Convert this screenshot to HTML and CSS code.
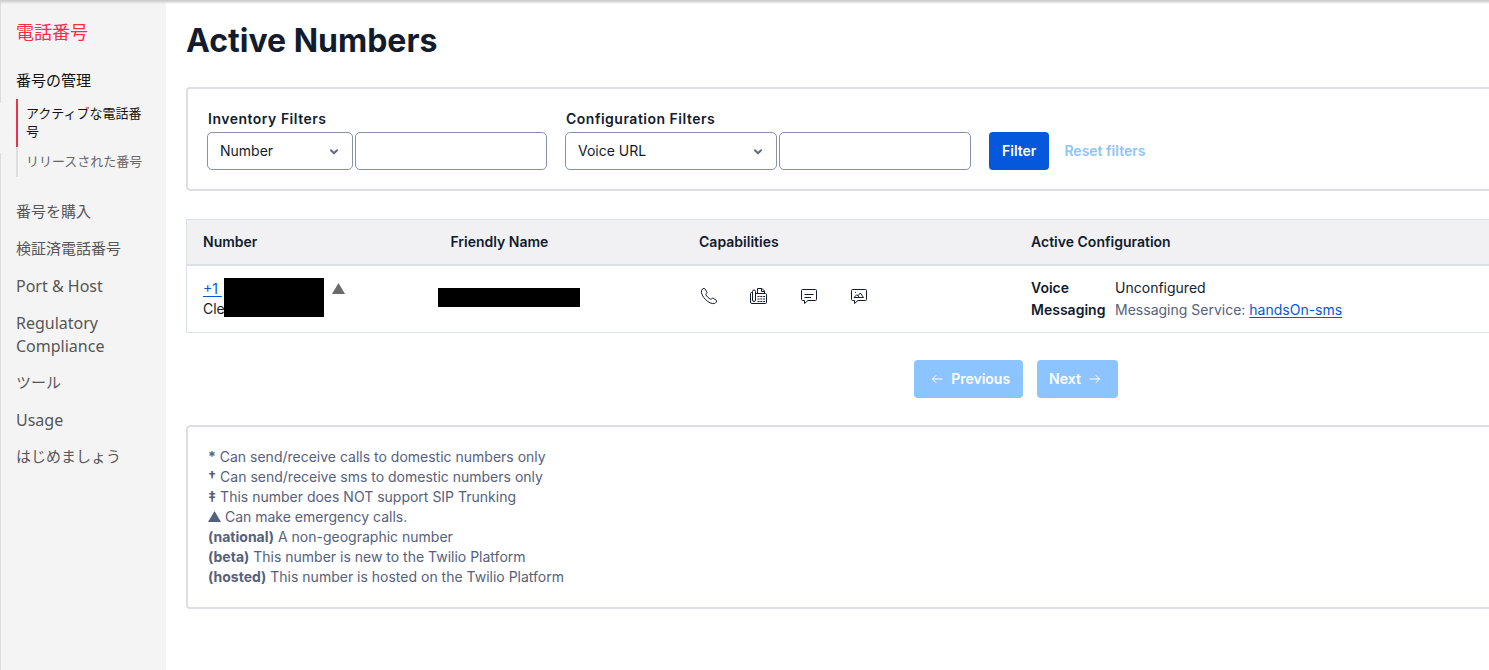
FILE: index.html
```html
<!DOCTYPE html>
<html lang="ja">
<head>
<meta charset="utf-8">
<title>Active Numbers</title>
<link rel="stylesheet" href="styles.css">
</head>
<body>
<div class="page">
  <nav class="sidebar" aria-label="電話番号">
    <a class="sidebar-title" href="#">電話番号</a>
    <ul class="menu">
      <li>
        <a class="menu-link current" href="#">番号の管理</a>
        <ul class="submenu">
          <li><a class="submenu-link active" href="#">アクティブな電話番号</a></li>
          <li><a class="submenu-link" href="#">リリースされた番号</a></li>
        </ul>
      </li>
      <li><a class="menu-link" href="#">番号を購入</a></li>
      <li><a class="menu-link" href="#">検証済電話番号</a></li>
      <li><a class="menu-link latin" href="#">Port &amp; Host</a></li>
      <li><a class="menu-link latin" href="#">Regulatory Compliance</a></li>
      <li><a class="menu-link" href="#">ツール</a></li>
      <li><a class="menu-link latin" href="#">Usage</a></li>
      <li><a class="menu-link" href="#">はじめましょう</a></li>
    </ul>
  </nav>

  <main class="content" lang="en">
    <h1 class="heading">Active Numbers</h1>

    <form class="panel filters">
      <div class="filter-group">
        <label class="filter-label" for="inventory">Inventory Filters</label>
        <div class="filter-fields">
          <span class="select-wrap narrow">
            <select class="field" id="inventory"><option>Number</option></select>
            <svg class="chevron" viewBox="0 0 8 6" aria-hidden="true"><path d="M1 1.2 4 4.2 7 1.2"/></svg>
          </span>
          <input class="field text" type="text" aria-label="Inventory filter value">
        </div>
      </div>
      <div class="filter-group">
        <label class="filter-label" for="configuration">Configuration Filters</label>
        <div class="filter-fields">
          <span class="select-wrap wide">
            <select class="field" id="configuration"><option>Voice URL</option></select>
            <svg class="chevron" viewBox="0 0 8 6" aria-hidden="true"><path d="M1 1.2 4 4.2 7 1.2"/></svg>
          </span>
          <input class="field text" type="text" aria-label="Configuration filter value">
        </div>
      </div>
      <div class="filter-actions">
        <button class="button primary" type="button">Filter</button>
        <button class="button plain" type="button" disabled>Reset filters</button>
      </div>
    </form>

    <table class="numbers">
      <colgroup><col class="col-number"><col class="col-name"><col class="col-capabilities"><col></colgroup>
      <thead>
        <tr><th>Number</th><th>Friendly Name</th><th>Capabilities</th><th>Active Configuration</th></tr>
      </thead>
      <tbody>
        <tr>
          <td>
            <div class="number-cell">
              <div class="number-lines"><a class="link" href="#">+1&nbsp;</a><span>Cle</span></div>
              <span class="redacted phone"></span>
              <svg class="triangle" viewBox="0 0 13 11" role="img" aria-label="Can make emergency calls"><path d="M6.500 0 13 11H0z"/></svg>
            </div>
          </td>
          <td class="name-cell"><span class="redacted name"></span></td>
          <td>
            <div class="capabilities">
              <svg viewBox="0 0 18 18" role="img" aria-label="Voice"><path d="M1.500 3.300C2.300 1.700 4 .9 4.800 1.700L6.900 4.900C7.400 6 5.700 6.600 5.900 7.500C6.500 9.400 8.900 11.600 10.600 12.200C11.600 12.400 12 10.700 13.100 11.200L16.400 13.300C17.300 14.200 16 16 14.400 16.500C9.500 17.900.2 9.200 1.500 3.300z"/></svg>
              <svg viewBox="0 0 18 18" role="img" aria-label="Fax"><path d="M2.500 5.500H1.500Q.5 5.500 .5 6.500V15Q.5 16.500 2 16.500H15.500Q16.500 16.500 16.500 15.500V7.500Q16.500 6.500 15.500 6.500H6M2.500 4.500Q2.500 3 4 3T5.500 4.500V13Q5.500 14.500 4 14.500T2.500 13zM7.500 6.500V1.500H12L14.500 4V6.500M11.500 1.500V4.500H14.500"/><path d="M7.500 9.500H15M7.500 12H15M7.500 14.500H15" stroke-dasharray="2 .8"/></svg>
              <svg viewBox="0 0 18 18" role="img" aria-label="SMS"><path d="M2.500 2.500H15.500Q16.500 2.500 16.500 3.500V12.500Q16.500 13.500 15.500 13.500H8L4.500 16.500V13.500H2.500Q1.500 13.500 1.500 12.500V3.500Q1.500 2.500 2.500 2.500zM4.500 7.500H13.500M4.500 10.500H11"/></svg>
              <svg viewBox="0 0 18 18" role="img" aria-label="MMS"><path d="M2.500 2.500H15.500Q16.500 2.500 16.500 3.500V12.500Q16.500 13.500 15.500 13.500H8L4.500 16.500V13.500H2.500Q1.500 13.500 1.500 12.500V3.500Q1.500 2.500 2.500 2.500zM4 10.500 6.800 7.700 8 8.800 10.300 6 13.500 10.500zM8 8.800 9 10M5 5.300H6"/></svg>
            </div>
          </td>
          <td class="config-cell">
            <dl class="config">
              <dt>Voice</dt><dd>Unconfigured</dd>
              <dt>Messaging</dt><dd class="muted">Messaging Service: <a class="link" href="#">handsOn-sms</a></dd>
            </dl>
          </td>
        </tr>
      </tbody>
    </table>

    <div class="pagination">
      <button class="button pager previous" type="button" disabled>
        <svg viewBox="0 0 12 10" aria-hidden="true"><path d="M11 5H1.500M5 1.500 1.500 5 5 8.500"/></svg>Previous</button>
      <button class="button pager next" type="button" disabled>Next<svg viewBox="0 0 12 10" aria-hidden="true"><path d="M1 5H10.500M7 1.500 10.500 5 7 8.500"/></svg></button>
    </div>

    <section class="panel">
      <ul class="legend">
        <li><b>*</b> Can send/receive calls to domestic numbers only</li>
        <li><b>†</b> Can send/receive sms to domestic numbers only</li>
        <li><b>‡</b> This number does NOT support SIP Trunking</li>
        <li><svg class="triangle" viewBox="0 0 13 11" aria-hidden="true"><path d="M6.500 0 13 11H0z"/></svg> Can make emergency calls.</li>
        <li><b>(national)</b> A non-geographic number</li>
        <li><b>(beta)</b> This number is new to the Twilio Platform</li>
        <li><b>(hosted)</b> This number is hosted on the Twilio Platform</li>
      </ul>
    </section>
  </main>
</div>
</body>
</html>
```

FILE: styles.css
```css
* { box-sizing: border-box; }

body {
  margin: 0;
  background: #fff;
  color: #121c2d;
  font: 14px/20px Inter, "Noto Sans CJK JP", sans-serif;
}

/* Shadow of the bar above the page */
body::before {
  content: "";
  position: fixed;
  inset: 0 0 auto;
  height: 4px;
  background: linear-gradient(#c8c8c8, #d4d4d4 30%, rgba(220, 220, 220, 0));
}

ul, dl, dd { margin: 0; padding: 0; list-style: none; }

.page { display: flex; min-height: 100vh; }

.sidebar {
  flex: 0 0 166px;
  padding: 19px 16px;
  background:
    linear-gradient(#dcdcdc 103px, #f4f4f4 103px, #f4f4f4 153px, #dcdcdc 153px) left / 1px 100% no-repeat,
    #f4f4f4;
  font-family: "Noto Sans CJK JP", sans-serif;
}

.sidebar a { display: block; text-decoration: none; }

.sidebar-title {
  margin-bottom: 19px;
  color: #f22f46;
  font-size: 18px;
  line-height: 24px;
}

.menu-link {
  padding: 6px 0 8px;
  color: #565656;
  font-size: 15px;
  line-height: 23px;
}

.menu-link.latin {
  padding: 8px 0 6px;
  font-family: "Noto Sans", sans-serif;
  font-size: 16px;
}

.menu-link.current { color: #121212; }

.submenu { margin-bottom: 16px; }

.submenu-link {
  padding: 5px 0 7px 8px;
  border-left: 2px solid #dedede;
  color: #666;
  font-size: 13px;
  line-height: 18px;
}

.submenu-link.active { border-color: #f22f46; color: #121212; }

.content { flex: 1; min-width: 0; padding: 21px 0 20px 20px; }

.heading {
  margin: 0 0 26px;
  font-size: 32px;
  font-weight: 700;
  line-height: 40px;
}

.panel {
  padding: 20px;
  border: 2px solid #dce0e6;
  border-right: 0;
  border-radius: 4px 0 0 4px;
}

.filters {
  display: flex;
  align-items: flex-end;
  gap: 18px;
  margin-bottom: 28px;
  padding: 20px 19px 19px;
}

.filter-label {
  display: block;
  margin-bottom: 3px;
  padding-left: 1px;
  font-weight: 600;
  letter-spacing: 0.5px;
}

.filter-fields { display: flex; gap: 2px; }

.select-wrap { position: relative; }
.select-wrap.narrow { width: 146px; }
.select-wrap.wide { width: 212px; }

.field {
  width: 100%;
  height: 38px;
  padding: 0 12px;
  border: 1px solid #8891aa;
  border-radius: 5px;
  background: #fff;
  color: #121c2d;
  font: inherit;
  appearance: none;
}

.field.text { width: 192px; }

.chevron {
  position: absolute;
  top: 17px;
  right: 15px;
  width: 8px;
  height: 6px;
  fill: none;
  stroke: #606b85;
  stroke-width: 2;
  stroke-linecap: round;
  stroke-linejoin: round;
  pointer-events: none;
}

.filter-actions { display: flex; gap: 3px; }

.button {
  height: 38px;
  padding: 0 12px;
  border: 0;
  border-radius: 4px;
  font: 600 14px/20px Inter, sans-serif;
  white-space: nowrap;
}

.button.primary { padding: 0 13px; background: #0557dc; color: #fff; }
.button.plain { background: none; color: #8cc4ff; }

.numbers {
  width: 100%;
  border: 1px solid #dce0e8;
  border-right: 0;
  border-spacing: 0;
  table-layout: fixed;
}

.col-number { width: 19%; }
.col-name { width: 19.1%; }
.col-capabilities { width: 25.5%; }

th {
  padding: 12px 16px;
  border-bottom: 2px solid #dce0e8;
  background: #f1f1f4;
  font-weight: 600;
  text-align: left;
}

td { height: 66px; padding: 12px 16px 10px; vertical-align: top; }
td.name-cell { padding: 22px 4px; }
td.config-cell { padding-top: 11px; }

.number-cell { display: flex; }
.number-lines { display: flex; flex-direction: column; width: 21px; white-space: nowrap; }
.number-lines .link { line-height: 22px; }
.number-lines span { line-height: 18px; }

.redacted { display: block; background: #000; }
.redacted.phone { width: 100px; height: 39px; }
.redacted.name { width: 142px; height: 19px; }

.link { color: #0557dc; text-decoration: underline; text-underline-offset: 2px; }

.triangle { width: 13px; height: 11px; fill: currentColor; }
.number-cell .triangle { margin: 5px 0 0 8px; color: #6b6b6b; }

.capabilities { display: flex; gap: 32px; padding: 9px 1px; }

.capabilities svg {
  width: 18px;
  height: 18px;
  fill: none;
  stroke: #121c2d;
  stroke-linejoin: round;
}

.config {
  display: grid;
  grid-template-columns: 84px 1fr;
  line-height: 22px;
}

.config dt { font-weight: 600; }
.muted { color: #56617c; }

.pagination {
  display: flex;
  justify-content: center;
  gap: 14px;
  margin: 27px 0;
  padding-left: 357px;
}

.pager {
  display: flex;
  align-items: center;
  gap: 8px;
  background: #8cc4ff;
  color: #fff;
}

.pager svg {
  width: 12px;
  height: 10px;
  fill: none;
  stroke: currentColor;
  stroke-linecap: round;
  stroke-linejoin: round;
}

.previous { padding: 0 13px 0 17px; }
.next { padding: 0 17px 0 12px; }

.legend { color: #56617c; }
.legend b { font-weight: 700; }
```
